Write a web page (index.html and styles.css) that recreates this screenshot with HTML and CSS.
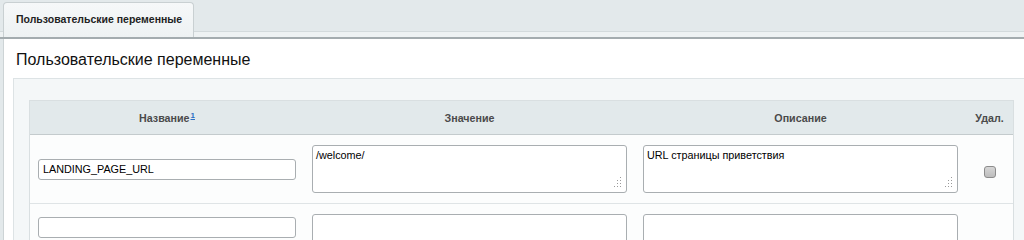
FILE: index.html
```html
<!DOCTYPE html>
<html lang="ru">

    <head>
        <meta charset="UTF-8">
        <meta name="viewport" content="width=device-width, initial-scale=1.0">
        <link rel="stylesheet" href="styles.css">
    </head>

    <body>
        <div class="tabBar">
            <div class="tab">Пользовательские переменные</div>
        </div>

        <div class="panel">
            <div class="panelTitle">Пользовательские переменные</div>

            <div class="panelBody">
                <table class="vars">
                    <colgroup>
                        <col class="colName">
                        <col class="colValue">
                        <col class="colDesc">
                        <col class="colDel">
                    </colgroup>
                    <thead>
                        <tr>
                            <th>Название<sup class="note">1</sup></th>
                            <th>Значение</th>
                            <th>Описание</th>
                            <th>Удал.</th>
                        </tr>
                    </thead>
                    <tbody>
                        <tr>
                            <td><input class="text" type="text" value="LANDING_PAGE_URL"></td>
                            <td><span class="field"><textarea class="area">/welcome/</textarea></span></td>
                            <td><span class="field"><textarea class="area">URL страницы приветствия</textarea></span></td>
                            <td class="del"><input class="check" type="checkbox"></td>
                        </tr>
                        <tr class="empty">
                            <td><input class="text" type="text" value=""></td>
                            <td><span class="field"><textarea class="area"></textarea></span></td>
                            <td><span class="field"><textarea class="area"></textarea></span></td>
                            <td class="del"></td>
                        </tr>
                    </tbody>
                </table>
            </div>
        </div>
    </body>

</html>
```

FILE: styles.css
```css
* {
    box-sizing: border-box;
}

body {
    margin: 0;
    overflow: hidden;
    background: #e3e9eb;
    font-family: "Liberation Sans", Arial, sans-serif;
    color: #000;
}

/* tabs */

.tabBar {
    display: flex;
    height: 39px;
    padding: 2px 0 0 3px;
    background: linear-gradient(#e3e9eb 0 31px, #d3dadc 31px 32px, #eef2f3 32px);
    border-bottom: 2px solid #a4acaf;
}

.tab {
    width: 191px;
    height: 35px;
    padding: 10px 0 0 12px;
    border: 1px solid #c9d0d2;
    border-bottom: none;
    border-radius: 4px 4px 0 0;
    background: linear-gradient(#f6f8f9, #eef2f3);
    font-size: 10.5px;
    line-height: 13px;
    font-weight: bold;
    color: #222;
}

/* panel */

.panel {
    margin-left: 3px;
    border-left: 1px solid #cdd4d6;
    background: #fff;
}

.panelTitle {
    height: 39px;
    padding-left: 12px;
    font-size: 16px;
    line-height: 41px;
    color: #111;
}

.panelBody {
    margin-left: 9px;
    padding: 21px 0 40px 15px;
    border-top: 1px solid #dde3e5;
    border-left: 1px solid #dde3e5;
    background: #f4f7f8;
}

/* table */

.vars {
    width: 985px;
    table-layout: fixed;
    border-collapse: separate;
    border-spacing: 0;
    border: 1px solid #d9dfe1;
    border-bottom: none;
    background: #fcfdfd;
}

.colName {
    width: 274px;
}

.colValue,
.colDesc {
    width: 331px;
}

.colDel {
    width: 47px;
}

.vars th {
    height: 34px;
    padding: 0;
    border-bottom: 1px solid #c4cbcd;
    background: #e2e9eb;
    font-size: 10.7px;
    font-weight: bold;
    color: #4a4a4a;
    text-align: center;
}

.note {
    font-size: 8px;
    color: #2b6fc4;
    text-decoration: underline;
    vertical-align: 4px;
    line-height: 0;
    margin-left: 1px;
}

.vars td {
    height: 69px;
    padding: 0 8px;
    border-bottom: 1px solid #dfe4e6;
    vertical-align: middle;
}

.vars tr.empty td {
    vertical-align: top;
    padding-top: 10px;
}

.vars tr.empty .text {
    margin-top: 3px;
}

.vars td.del {
    padding: 0;
    text-align: center;
}

/* controls */

.text {
    display: block;
    width: 100%;
    height: 21px;
    margin: 0;
    padding: 0 4px;
    border: 1px solid #a9aeb1;
    border-radius: 3px;
    background: #fff;
    font-family: "Liberation Sans", Arial, sans-serif;
    font-size: 10.8px;
    color: #000;
    outline: none;
}

.field {
    position: relative;
    display: block;
}

.field::after {
    content: '';
    position: absolute;
    right: 6px;
    bottom: 6px;
    width: 1px;
    height: 1px;
    background: #9a9a9a;
    box-shadow: -3px 0 #9a9a9a, -6px 0 #9a9a9a,
        0 -3px #9a9a9a, -3px -3px #9a9a9a,
        0 -6px #9a9a9a, 0 -9px #9a9a9a, -3px -6px #9a9a9a;
    pointer-events: none;
}

.area {
    display: block;
    width: 100%;
    height: 48px;
    margin: 0;
    padding: 3px 3px;
    border: 1px solid #a9aeb1;
    border-radius: 3px;
    background: #fff;
    font-family: "Liberation Sans", Arial, sans-serif;
    font-size: 10.8px;
    line-height: 13px;
    color: #000;
    resize: none;
    outline: none;
}

.check {
    appearance: none;
    display: inline-block;
    width: 12px;
    height: 12px;
    margin: 4px 0 0 1px;
    border: 1px solid #8c8c8c;
    border-radius: 3px;
    background: linear-gradient(#d6d6d6, #bdbdbd);
    vertical-align: middle;
}
```
